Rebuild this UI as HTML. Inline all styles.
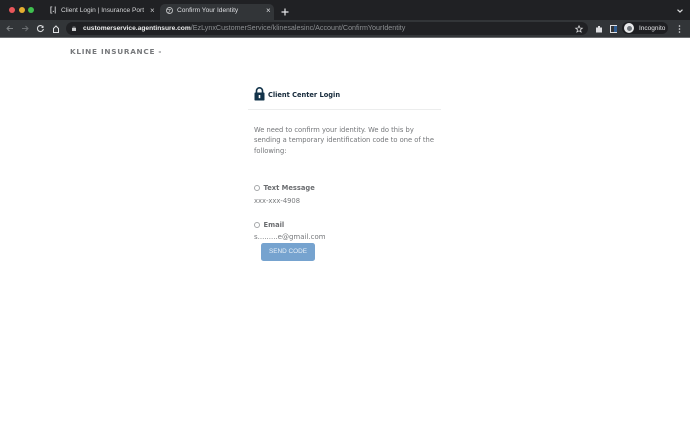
<!DOCTYPE html>
<html><head><meta charset="utf-8"><style>
html,body{margin:0;padding:0;background:#fff}
#r{position:relative;width:690px;height:428px;overflow:hidden;background:#fff;font-family:"DejaVu Sans","Liberation Sans",sans-serif;filter:blur(.25px)}
#r div,#r span.a{position:absolute;white-space:nowrap}
svg{position:absolute;overflow:visible}
.tab{font-family:"Liberation Sans",sans-serif;font-size:6.6px;color:#d4d5d7;line-height:10px}
</style></head><body><div id="r">
<div style="left:0;top:0;width:690px;height:20px;background:#202124"></div>
<div style="left:0;top:20px;width:690px;height:17px;background:#323538"></div>
<div style="left:0;top:37px;width:690px;height:1px;background:#6a6c6f"></div>
<div style="left:9px;top:7px;width:6px;height:6px;border-radius:50%;background:#e9565a"></div>
<div style="left:19px;top:7px;width:6px;height:6px;border-radius:50%;background:#e5ae30"></div>
<div style="left:28px;top:7px;width:6px;height:6px;border-radius:50%;background:#3fc14f"></div>
<div style="left:160px;top:4px;width:114px;height:16px;background:#323538;border-radius:5px 5px 0 0"></div>
<div class="tab" style="left:50px;top:6px;color:#cfd0d2;font-size:7px;font-weight:bold">[.|</div>
<div class="tab" style="left:61px;top:6px;width:83px;overflow:hidden">Client Login | Insurance Portal</div>
<div class="tab" style="left:150px;top:6px;font-size:8px;color:#c8c9cb">×</div>
<svg style="left:166px;top:7px" width="7" height="7" viewBox="0 0 7 7"><circle cx="3.5" cy="3.5" r="3" fill="none" stroke="#b8babc" stroke-width="1"/><path d="M1 2.5h4M2.5 6l1.5-3" stroke="#b8babc" stroke-width=".7" fill="none"/></svg>
<div class="tab" style="left:177px;top:6px;color:#dcdde0">Confirm Your Identity</div>
<div class="tab" style="left:266px;top:6px;font-size:8px;color:#dcdde0">×</div>
<svg style="left:281px;top:8px" width="8" height="8" viewBox="0 0 8 8"><path d="M4 .5v7M.5 4h7" stroke="#e6e7e9" stroke-width="1.2"/></svg>
<svg style="left:677px;top:9px" width="6" height="4" viewBox="0 0 6 4"><path d="M.5 .7L3 3l2.500-2.300" stroke="#d8d9db" stroke-width="1.200" fill="none"/></svg>
<svg style="left:6px;top:25px" width="7" height="7" viewBox="0 0 7 7"><path d="M7 3.500H1M3.500 1L1 3.500 3.500 6" stroke="#7d8083" stroke-width="1" fill="none"/></svg>
<svg style="left:22px;top:25px" width="7" height="7" viewBox="0 0 7 7"><path d="M0 3.500h6M3.500 1L6 3.500 3.500 6" stroke="#6a6d70" stroke-width="1" fill="none"/></svg>
<svg style="left:37px;top:25px" width="7" height="7" viewBox="0 0 7 7"><path d="M6 2A3 3 0 1 0 6.400 4" stroke="#d8d9db" stroke-width="1.100" fill="none"/><path d="M6.500 .5v2.500H4z" fill="#d8d9db"/></svg>
<svg style="left:52px;top:24.500px" width="8" height="8" viewBox="0 0 8 8"><path d="M1.500 7.500V3.500L4 1l2.500 2.500v4z" fill="none" stroke="#e0e1e3" stroke-width="1"/></svg>
<div style="left:66px;top:22px;width:522px;height:13px;border-radius:7px;background:#202124"></div>
<svg style="left:72px;top:26px" width="4" height="5" viewBox="0 0 4 5"><rect y="2" width="4" height="3" fill="#c9cacc"/><path d="M1 2V1h2v1" stroke="#c9cacc" stroke-width=".6" fill="none"/></svg>
<div class="tab" style="left:83px;top:24px;font-size:6.650px;line-height:9px;color:#eceded;font-weight:bold;font-family:'Liberation Sans',sans-serif">customerservice.agentinsure.com<span style="font-weight:normal;font-size:7.150px;color:#8c8f92">/EzLynxCustomerService/klinesalesinc/Account/ConfirmYourIdentity</span></div>
<svg style="left:575px;top:25px" width="8" height="8" viewBox="0 0 8 8"><path d="M4 .8l1 2.200 2.300.2-1.800 1.500.6 2.300L4 5.800 1.900 7l.6-2.300L.7 3.200 3 3z" fill="none" stroke="#d8d9db" stroke-width=".8"/></svg>
<svg style="left:595px;top:25px" width="8" height="8" viewBox="0 0 8 8"><path d="M1 2.500h2V1h2v1.500h2v5H1z" fill="#dcdde0"/></svg>
<div style="left:610px;top:25px;width:5px;height:6px;border:1px solid #e0e1e3"></div>
<div style="left:614px;top:26px;width:3px;height:6px;background:#2f5d93"></div>
<div style="left:622px;top:22px;width:46px;height:12px;border-radius:6px;background:#1e1f22"></div>
<div style="left:624px;top:23px;width:10px;height:10px;border-radius:50%;background:#e8e9ea"></div>
<div style="left:626.500px;top:25.500px;width:5px;height:5px;border-radius:50%;background:#70757a"></div>
<div class="tab" style="left:639px;top:24px;font-size:6.500px;line-height:9px;color:#e4e5e7">Incognito</div>
<svg style="left:678px;top:25px" width="3" height="8" viewBox="0 0 3 8"><circle cx="1.500" cy="1" r=".8" fill="#e0e1e3"/><circle cx="1.500" cy="4" r=".8" fill="#e0e1e3"/><circle cx="1.500" cy="7" r=".8" fill="#e0e1e3"/></svg>

<div style="left:70px;top:47px;font-size:7.300px;line-height:10px;font-weight:bold;letter-spacing:.72px;color:#77797c">KLINE INSURANCE -</div>

<svg style="left:254px;top:87px" width="11" height="14" viewBox="0 0 11 14"><path d="M2.500 6V3.800a3 3 0 0 1 6 0V6" fill="none" stroke="#12334a" stroke-width="1.600"/><rect x=".5" y="5.500" width="10" height="8" rx=".8" fill="#12334a"/><rect x="4.700" y="8" width="1.600" height="3.200" fill="#fff"/></svg>
<div style="left:268px;top:90px;font-size:6.650px;line-height:10px;font-weight:bold;color:#15293a">Client Center Login</div>
<div style="left:248px;top:109px;width:193px;height:1px;background:#eceded"></div>
<div style="left:254px;top:125px;font-size:6.730px;line-height:10.300px;color:#737578">We need to confirm your identity. We do this by<br>sending a temporary identification code to one of the<br>following:</div>

<div style="left:254px;top:185px;width:4px;height:4px;border:1px solid #a5a7a9;border-radius:50%"></div>
<div style="left:263.500px;top:182.500px;font-size:6.720px;line-height:10px;font-weight:bold;color:#6b6d70">Text Message</div>
<div style="left:254px;top:195.500px;font-size:6.760px;line-height:10px;color:#77797c">xxx-xxx-4908</div>
<div style="left:254px;top:222px;width:4px;height:4px;border:1px solid #a5a7a9;border-radius:50%"></div>
<div style="left:263.500px;top:219.500px;font-size:6.720px;line-height:10px;font-weight:bold;color:#6b6d70">Email</div>
<div style="left:254px;top:232px;font-size:7px;line-height:10px;color:#77797c">s.........e@gmail.com</div>
<div style="left:261px;top:243px;width:54px;height:18px;border-radius:2.500px;background:#76a3cf;color:#e8f0f8;font-size:6.400px;line-height:18px;text-align:center;font-family:'Liberation Sans',sans-serif">SEND CODE</div>
</div></body></html>
